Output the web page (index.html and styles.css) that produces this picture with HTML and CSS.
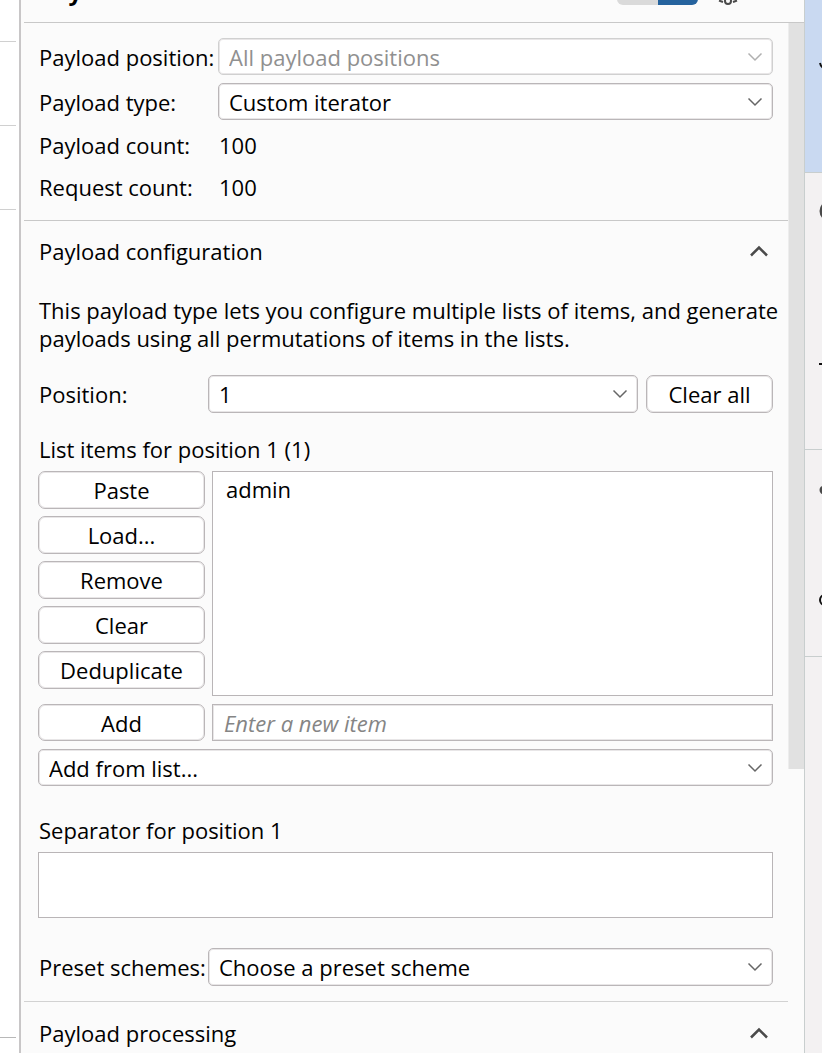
FILE: index.html
```html
<!DOCTYPE html>
<html lang="en">
<head>
<meta charset="utf-8">
<title>Payloads</title>
<meta name="viewport" content="width=device-width, initial-scale=1">
<link rel="stylesheet" href="styles.css">
</head>
<body>
<svg class="defs" aria-hidden="true">
  <symbol id="down" viewBox="0 0 16 10"><path d="M1.500 1.500 8 8l6.500-6.500"/></symbol>
  <symbol id="up" viewBox="0 0 20 12"><path d="M2 10.500 10 2.500l8 8"/></symbol>
</svg>
<div class="app">
  <div class="editor" aria-hidden="true">
    <div class="cell first"></div><div class="cell"></div><div class="cell"></div><div class="cell rest"></div>
  </div>
  <main class="panel">
    <header class="top">
      <h1>Payloads</h1>
      <div class="tools">
        <span class="toggle"><i></i><i class="on"></i></span>
        <svg class="gear" viewBox="0 0 20 20" aria-hidden="true"><path d="M10 1v3M1 10h3M16 10h3M3.500 3.500l2.500 2.500M14 6l2.500-2.500M1 15.500l4 1.500M19 15.500l-4 1.500"/><circle cx="10" cy="9" r="5"/><circle cx="10" cy="16" r="3"/></svg>
      </div>
    </header>
    <div class="body">
      <div class="content">
        <section class="summary">
          <div class="row">
            <label for="pos">Payload position:</label>
            <div class="pick off"><select id="pos" disabled><option>All payload positions</option></select><svg><use href="#down"/></svg></div>
          </div>
          <div class="row">
            <label for="type">Payload type:</label>
            <div class="pick"><select id="type"><option>Custom iterator</option></select><svg><use href="#down"/></svg></div>
          </div>
          <div class="row count"><span>Payload count:</span><span>100</span></div>
          <div class="row count"><span>Request count:</span><span>100</span></div>
        </section>
        <section class="config">
          <div class="head"><h2>Payload configuration</h2><button class="fold" aria-label="Collapse payload configuration"><svg><use href="#up"/></svg></button></div>
          <p>This payload type lets you configure multiple lists of items, and generate payloads using all permutations of items in the lists.</p>
          <div class="line position">
            <label for="index">Position:</label>
            <div class="pick"><select id="index"><option>1</option></select><svg><use href="#down"/></svg></div>
            <button class="btn clear">Clear all</button>
          </div>
          <label class="caption" for="items">List items for position 1 (1)</label>
          <div class="list">
            <div class="stack">
              <button class="btn">Paste</button>
              <button class="btn">Load...</button>
              <button class="btn">Remove</button>
              <button class="btn">Clear</button>
              <button class="btn">Deduplicate</button>
            </div>
            <select class="items" id="items" size="6"><option>admin</option></select>
            <button class="btn add">Add</button>
            <input class="new" type="text" placeholder="Enter a new item" aria-label="New item">
          </div>
          <div class="pick"><select aria-label="Add from list"><option>Add from list...</option></select><svg><use href="#down"/></svg></div>
          <label class="caption sep" for="sep">Separator for position 1</label>
          <textarea id="sep"></textarea>
          <div class="line preset">
            <label for="scheme">Preset schemes:</label>
            <div class="pick"><select id="scheme"><option>Choose a preset scheme</option></select><svg><use href="#down"/></svg></div>
          </div>
        </section>
        <section class="processing">
          <div class="head"><h2>Payload processing</h2><button class="fold" aria-label="Collapse payload processing"><svg><use href="#up"/></svg></button></div>
        </section>
      </div>
      <div class="scroll"><div class="thumb"></div></div>
    </div>
  </main>
  <aside class="side" aria-hidden="true">
    <div class="tab active"><svg viewBox="0 0 22 22"><path class="ink" d="M1 15q1 5 5 5q4 0 4-6V2"/></svg></div>
    <div class="tab mid"><svg viewBox="0 0 22 22"><circle cx="11" cy="11" r="9"/></svg><svg viewBox="0 0 22 22"><path class="ink" d="M0 3h14M7 3v17"/></svg></div>
    <div class="tab low"><svg viewBox="0 0 22 22"><circle cx="5" cy="11" r="3"/></svg><svg viewBox="0 0 22 22"><circle class="ink" cx="6" cy="11" r="5"/></svg></div>
  </aside>
</div>
</body>
</html>
```
FILE: styles.css
```css
* { box-sizing: border-box; }
body { margin: 0; height: 100vh; overflow: hidden; background: #fff; color: #000; font: 22px/28px "Open Sans", "Noto Sans", sans-serif; }
button, input, select, textarea { font: inherit; color: inherit; }
h1, h2, p { margin: 0; font-size: 22px; font-weight: 400; }
svg { fill: none; stroke: #555; stroke-width: 2; }
.defs { position: absolute; width: 0; height: 0; }
.app { display: grid; grid-template-columns: 19px minmax(0, 1fr) 17px; height: 100vh; overflow: hidden; }

.editor { display: flex; flex-direction: column; padding: 0 3px 15px 0; }
.cell { height: 84px; border-bottom: 1px solid #d0d0d0; }
.cell.first { height: 42px; }
.cell.rest { flex: 1; border-color: #b8b8b8; }

.panel { display: flex; flex-direction: column; min-height: 0; background: #fbfbfb; border-left: 2px solid #c8c6c7; border-right: 1px solid #c8cece; }
.top { display: flex; flex: none; justify-content: space-between; align-items: flex-end; height: 23px; margin-left: 3px; padding: 0 66px 0 15px; border-bottom: 1px solid #c8c8c8; overflow: hidden; }
h1 { font-size: 24px; font-weight: 700; line-height: 32px; padding-bottom: 15px; }
.tools { display: flex; align-items: flex-end; gap: 20px; padding-bottom: 17px; }
.toggle { display: flex; width: 81px; height: 28px; border-radius: 6px; overflow: hidden; }
.toggle i { flex: 1; background: #dadada; }
.toggle .on { background: #25639e; }
.gear { width: 20px; height: 20px; stroke: #4a4a4a; }

.body { display: flex; flex: 1; min-height: 0; }
.content { flex: 1; min-width: 0; margin-left: 3px; overflow: hidden; }
.scroll { width: 16px; }
.thumb { height: 746px; background: #e1e1e1; border-left: 1px solid #ededed; }
section { padding: 0 15px 0 14px; }
.summary { padding-top: 15px; padding-bottom: 20px; border-bottom: 1px solid #c8c8c8; }
.row { display: grid; grid-template-columns: 180px minmax(0, 1fr); align-items: center; margin-bottom: 8px; }
.row > :first-child, .line label, .caption, .head h2, p { padding-left: 1px; }
.row.count { height: 42px; margin: 0; }
.count span:last-child { padding-left: 1px; }
.row.count:nth-child(3) { margin-top: -4px; }
.row.count:nth-child(4) { margin-bottom: -8px; }
.pick { position: relative; flex: 1; min-width: 0; }
.pick select { display: block; width: 100%; height: 37px; padding: 0 36px 0 10px; appearance: none; border: 1px solid #bab6b8; box-shadow: inset 0 0 0 1px #e8e6e7; border-radius: 5px; background: #fff; opacity: 1; }
.pick svg { position: absolute; right: 10px; top: 50%; width: 16px; height: 10px; margin-top: -5px; stroke-width: 1.5; stroke: #666; pointer-events: none; }
.off select { color: #909090; border-color: #d0d0d0; }
.off svg { stroke: #b0b0b0; }

.config { display: flex; flex-direction: column; padding-bottom: 15px; border-bottom: 1px solid #d2d2d2; }
.head { display: flex; justify-content: space-between; align-items: center; height: 60px; }
.fold { padding: 0; border: 0; background: none; width: 20px; height: 12px; margin-right: 4px; }
.fold svg { display: block; width: 20px; height: 12px; stroke-width: 2.5; stroke: #4a4a4a; }
p { margin-top: 15px; margin-right: -14px; }
.line { display: flex; align-items: center; }
.line label { flex: none; width: 170px; }
.line .pick select { height: 38px; }
.position { margin-top: 23px; }
.btn { height: 38px; padding: 0 8px; border: 1px solid #bab6b8; box-shadow: inset 0 0 0 1px #e8e6e7; border-radius: 7px; background: #fff; }
.clear { flex: none; width: 127px; margin-left: 8px; }
.caption { margin-top: 22px; margin-bottom: 8px; }
.list { display: grid; grid-template-columns: 167px minmax(0, 1fr); gap: 8px 7px; margin-bottom: 8px; }
.stack { display: flex; flex-direction: column; gap: 7px; }
.items { width: 100%; height: 225px; padding: 2px 13px; border: 1px solid #b9b5b7; border-radius: 0; background: #fff; overflow: hidden; outline: 0; }
.items option { padding: 0; min-height: 28px; }
.add, .new { height: 37px; }
.new { width: 100%; padding: 0 11px; border: 1px solid #bab6b8; box-shadow: inset 0 0 0 1px #e8e6e7; background: #fff; }
.new::placeholder { color: #858585; font-style: italic; opacity: 1; }
.sep { margin-top: 30px; }
textarea { display: block; width: 100%; height: 66px; border: 1px solid #b9b5b7; background: #fff; resize: none; }
.preset { margin-top: 30px; }
.processing .head { height: 62px; }

.side { display: flex; flex-direction: column; background: #f3f1f2; overflow: hidden; }
.tab { display: flex; flex-direction: column; border-bottom: 1px solid #c8cece; overflow: hidden; padding-left: 14px; }
.tab svg { flex: none; width: 22px; height: 22px; stroke: #4a4a4a; stroke-width: 3; }
.tab .ink { stroke: #111; stroke-width: 2; }
.active { height: 173px; padding-top: 48px; background: #c9d9f1; }
.mid { height: 277px; padding-top: 27px; gap: 139px; }
.low { height: 207px; padding-top: 29px; gap: 88px; }
```
